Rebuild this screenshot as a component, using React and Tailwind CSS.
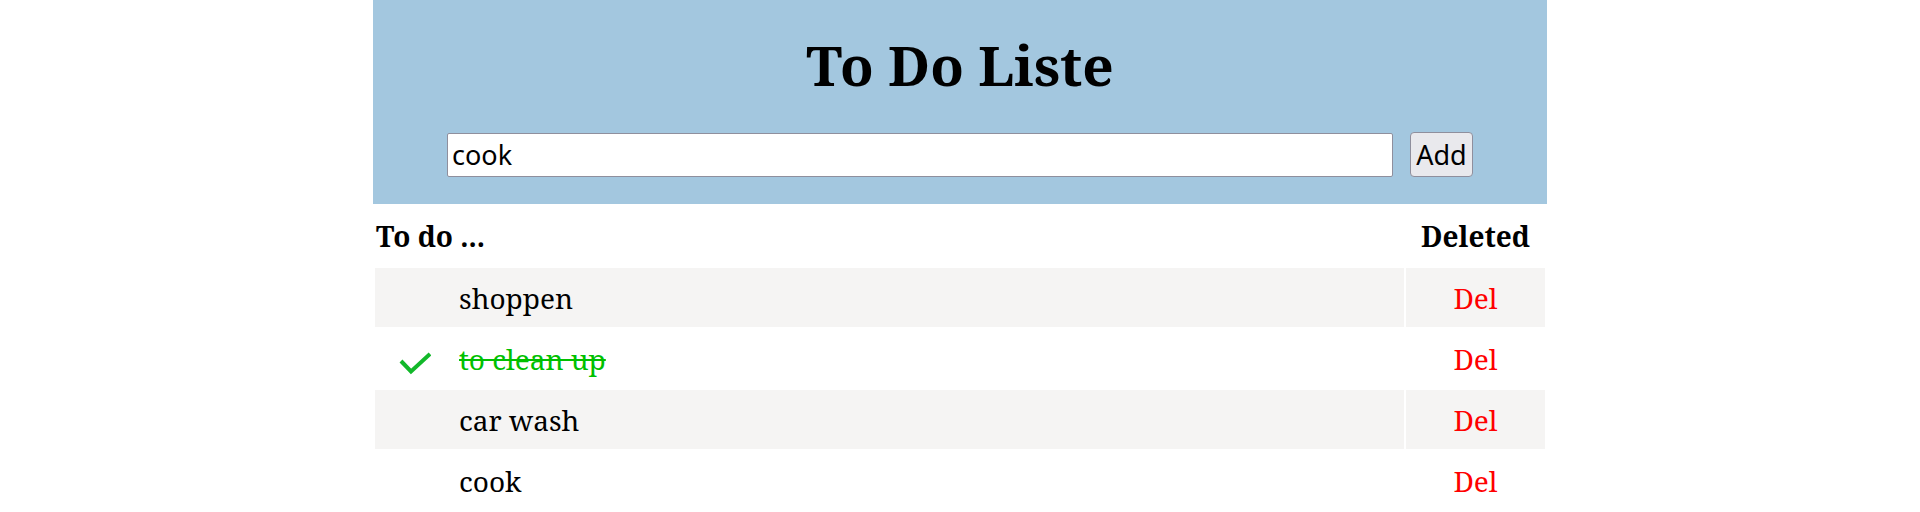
import React, { useState } from 'react';

const initialTodos = [
  { id: 1, text: 'shoppen', done: false },
  { id: 2, text: 'to clean up', done: true },
  { id: 3, text: 'car wash', done: false },
  { id: 4, text: 'cook', done: false },
];

const CheckMark = () => (
  <svg className="mt-[8px]" width="32" height="24" viewBox="0 0 32 24" fill="none">
    <polyline points="2,10 12,20.5 31,3" stroke="#12b82a" strokeWidth="4" strokeLinecap="butt" strokeLinejoin="miter" />
  </svg>
);

const App = () => {
  const [todos, setTodos] = useState(initialTodos);
  const [value, setValue] = useState('cook');

  const addTodo = () => {
    if (!value.trim()) return;
    setTodos([...todos, { id: Date.now(), text: value, done: false }]);
  };

  const toggle = (id) => {
    setTodos(todos.map((t) => (t.id === id ? { ...t, done: !t.done } : t)));
  };

  const remove = (id) => {
    setTodos(todos.filter((t) => t.id !== id));
  };

  return (
    <div className="min-h-[512px] bg-white font-['Noto_Serif',serif] text-black">
      <div className="mx-auto w-[1174px]">
        <header className="h-[204px] bg-[#a3c7df]">
          <h1 className="pt-[27px] text-center text-[55px] font-bold leading-[75px]">To Do Liste</h1>
          <div className="mt-[30px] flex items-center gap-[17px] px-[74px]">
            <input
              className="h-[44px] flex-1 rounded-[2px] border border-[#8f8f9d] bg-white px-[4px] font-['Noto_Sans',sans-serif] text-[27px] outline-none"
              value={value}
              onChange={(e) => setValue(e.target.value)}
            />
            <button
              className="h-[45px] w-[63px] rounded-[4px] border border-[#8f8f9d] bg-[#e9e9ed] font-['Noto_Sans',sans-serif] text-[27px] leading-none"
              onClick={addTodo}
            >
              Add
            </button>
          </div>
        </header>

        <table className="w-[1174px] border-separate border-spacing-[2px] text-[28px]">
          <thead>
            <tr>
              <th className="h-[60px] p-0 pl-[1px] text-left font-bold">To do ...</th>
              <th className="h-[60px] w-[139px] p-0 text-center font-bold">Deleted</th>
            </tr>
          </thead>
          <tbody>
            {todos.map((todo, i) => (
              <tr key={todo.id} className={i % 2 === 0 ? 'bg-[#f5f4f3]' : 'bg-white'}>
                <td className="h-[59px] p-0 cursor-pointer" onClick={() => toggle(todo.id)}>
                  <div className="flex items-center">
                    <span className="flex w-[84px] pl-[24px]">{todo.done && <CheckMark />}</span>
                    <span className={todo.done ? 'text-[#00c000] line-through' : ''}>{todo.text}</span>
                  </div>
                </td>
                <td className="h-[59px] p-0 text-center">
                  <button className="cursor-pointer text-[#ff0000]" onClick={() => remove(todo.id)}>
                    Del
                  </button>
                </td>
              </tr>
            ))}
          </tbody>
        </table>
      </div>
    </div>
  );
};

export default App;
